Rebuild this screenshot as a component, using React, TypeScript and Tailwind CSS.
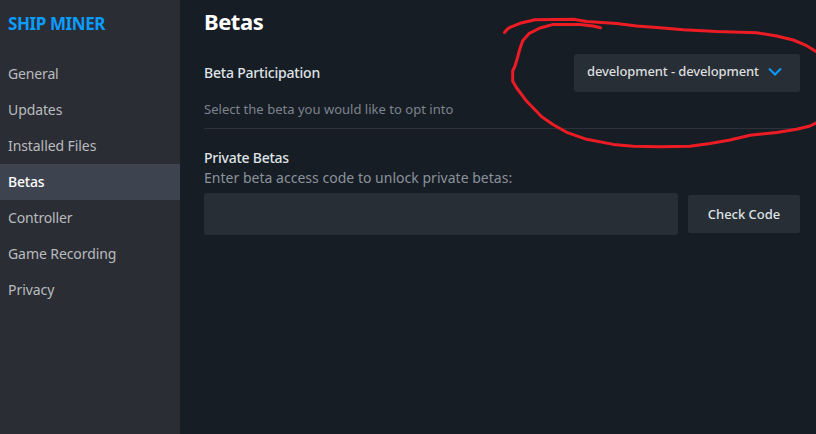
const items = [
  { label: 'General', cls: 'tracking-[-0.15px]' },
  { label: 'Updates', cls: 'tracking-[-0.1px]' },
  { label: 'Installed Files', cls: 'tracking-[-0.08px]' },
  { label: 'Betas', cls: 'tracking-[-0.2px]' },
  { label: 'Controller', cls: 'tracking-[-0.15px]' },
  { label: 'Game Recording', cls: 'tracking-[-0.08px]' },
  { label: 'Privacy', cls: 'tracking-[-0.05px]' },
];

function Sidebar() {
  return (
    <nav className="w-[180px] shrink-0 bg-[#2b2d34]">
      <h1 className="flex h-12 items-center px-2 text-[17px] font-bold text-[#0a9cff]">
        <span className="tracking-[-0.4px]">SHIP MINER</span>
      </h1>
      <ul className="mt-2">
        {items.map((item) => (
          <li
            key={item.label}
            className={
              item.label === 'Betas'
                ? 'flex h-9 items-center bg-[#3d444f] px-2 text-sm font-medium text-white'
                : 'flex h-9 items-center px-2 text-sm text-[#b8bcbf]'
            }
          >
            <span className={item.cls}>{item.label}</span>
          </li>
        ))}
      </ul>
    </nav>
  );
}

function Scribble() {
  return (
    <svg className="pointer-events-none absolute inset-0" width="816" height="434" fill="none" stroke="#ed1c24" strokeWidth="3" strokeLinecap="round" strokeLinejoin="round">
      <path d="M504.500 32.500L507 29.500L510 27.300L520 23.300L535 19.700L573.300 19.300L586.700 21.500L616.700 23.600L636.700 26L660 27.700L683.300 29.700L716.700 31.600L756.700 32.700L776.700 36L793.300 40L806.700 45.700L817 52" />
      <path d="M600.500 27.800L593 26L580 24.400L553.300 24.400L540 28L529.300 33.300L522.700 40.700L519.500 50L517.300 58.300L515 66L512.700 71L512.700 81.300L516.700 88L526.700 101.300L541.700 116.700L553.300 124.700L566.700 132.300L586.700 139.300L613.300 144.400L633.300 146.200L660 146.700L690 146.300L710 143.400L730 140L750 135.300L776.700 132.500L796.700 129.300L810 126L817 122.500" />
    </svg>
  );
}

export default function App() {
  return (
    <div className="relative flex h-[434px] w-[816px] overflow-hidden bg-[#171d25] font-['Noto_Sans','Liberation_Sans',sans-serif]">
      <Sidebar />
      <main className="flex-1 pl-6 pr-4">
        <h2 className="flex h-[42px] items-center text-[22px] font-bold text-white">
          <span className="tracking-[-0.45px]">Betas</span>
        </h2>
        <section className="h-[87px] border-b border-[#2d323a] pt-3">
          <div className="flex h-[38px] items-center justify-between">
            <span className="text-sm font-medium tracking-[-0.2px] text-[#dfe3e6]">Beta Participation</span>
            <button className="flex h-[38px] w-[226px] items-center rounded-[3px] bg-[#282e36] pl-[13px] pr-[18px] text-left">
              <span className="-mt-[3px] whitespace-nowrap text-[13px] font-medium tracking-[-0.12px] text-[#dcdedf]">development - development</span>
              <svg className="-mt-[3px] ml-auto shrink-0" width="14" height="9" viewBox="0 0 14 9" fill="none" stroke="#0a9cff" strokeWidth="2">
                <path d="M1 1.500L7 7.500L13 1.500" />
              </svg>
            </button>
          </div>
          <p className="mt-[7px] text-[13px] leading-5 tracking-[0.02px] text-[#7d848d]">
            <span>Select the beta you would like to opt into</span>
          </p>
        </section>
        <section className="pt-[19px]">
          <h3 className="text-sm font-medium leading-5 tracking-[-0.24px] text-[#dfe3e6]">
            <span>Private Betas</span>
          </h3>
          <p className="text-sm leading-5 tracking-[0.02px] text-[#8b929a]">
            <span>Enter beta access code to unlock private betas:</span>
          </p>
          <div className="mt-[5px] flex items-center gap-[10px]">
            <input className="h-[42px] w-[474px] rounded-[3px] bg-[#282e36]" />
            <button className="h-[38px] w-28 rounded-[2px] bg-[#282e36] pt-0.5 text-[13px] font-medium text-[#dfe3e6]">
              <span className="tracking-[-0.03px]">Check Code</span>
            </button>
          </div>
        </section>
      </main>
      <Scribble />
    </div>
  );
}
